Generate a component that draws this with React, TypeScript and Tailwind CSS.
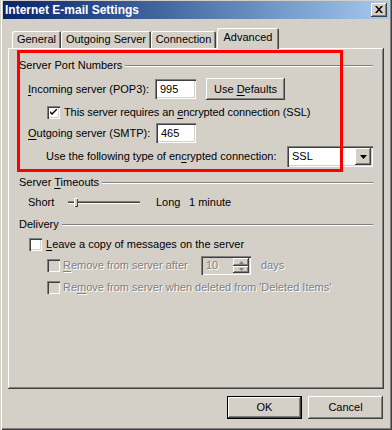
import type { ReactNode } from 'react';

const raised =
  'shadow-[inset_-1px_-1px_0_#404040,inset_1px_1px_0_#ffffff,inset_-2px_-2px_0_#808080,inset_2px_2px_0_#d4d0c8]';
const sunken =
  'shadow-[inset_1px_1px_0_#808080,inset_2px_2px_0_#404040,inset_-1px_-1px_0_#ffffff,inset_-2px_-2px_0_#d4d0c8]';
const disabledText = 'text-[#808080] [text-shadow:1px_1px_0_#ffffff]';

function U({ children }: { children: ReactNode }) {
  return <span className="underline underline-offset-[2px]">{children}</span>;
}

function Checkbox({ checked = false, disabled = false }: { checked?: boolean; disabled?: boolean }) {
  return (
    <div className={`w-[13px] h-[13px] shrink-0 flex items-center justify-center ${sunken} ${disabled ? 'bg-[#d4d0c8]' : 'bg-white'}`}>
      {checked && (
        <svg width="7" height="7" viewBox="0 0 7 7">
          <path d="M0 2 L0 4 L2 6 L7 1 L7 -1 L2 4 Z" fill="#000" />
        </svg>
      )}
    </div>
  );
}

function GroupHeader({ label, className = '' }: { label: ReactNode; className?: string }) {
  return (
    <div className={`flex items-center h-[13px] ${className}`}>
      <span className="whitespace-nowrap pr-[3px]">{label}</span>
      <div className="flex-1 h-[2px] border-t border-t-[#808080] border-b border-b-white" />
    </div>
  );
}

function Tab({ label, w, active = false }: { label: string; w: string; active?: boolean }) {
  return (
    <div
      className={`${w} flex items-center justify-center rounded-t-[2px] bg-[#d4d0c8] shadow-[inset_1px_1px_0_#ffffff,inset_-1px_0_0_#404040,inset_-2px_0_0_#808080] ${
        active ? 'h-[21px] -mb-[1px] relative z-10 pb-[2px]' : 'h-[17px]'
      }`}
    >
      {label}
    </div>
  );
}

function Button({ children, isDefault = false }: { children: ReactNode; isDefault?: boolean }) {
  if (isDefault) {
    return (
      <div className="w-[75px] h-[23px] border border-black flex">
        <div className={`flex-1 flex items-center justify-center ${raised}`}>{children}</div>
      </div>
    );
  }
  return <div className={`w-[75px] h-[23px] flex items-center justify-center ${raised}`}>{children}</div>;
}

export default function App() {
  return (
    <div className="relative w-[392px] h-[430px] overflow-hidden bg-[#d4d0c8] text-black text-[11px] leading-[13px] font-['Liberation_Sans','DejaVu_Sans',sans-serif] shadow-[inset_1px_0_0_#d4d0c8,inset_2px_0_0_#ffffff,inset_-1px_-1px_0_#404040,inset_-2px_-2px_0_#808080] pt-[1px]">
      {/* title bar */}
      <div className="mx-[3px] h-[18px] flex items-center bg-linear-to-r from-[#0a246a] to-[#a6caf0]">
        <span className="pl-[2px] text-white font-bold text-[12px]">Internet E-mail Settings</span>
        <div className="ml-auto mr-[2px] w-[16px] h-[14px] flex items-center justify-center bg-[#d4d0c8] shadow-[inset_-1px_-1px_0_#404040,inset_1px_1px_0_#ffffff,inset_-2px_-2px_0_#808080]">
          <svg width="8" height="7" viewBox="0 0 8 7" className="-mt-[1px] -ml-[1px]">
            <path d="M0 0 H2 L4 2.5 L6 0 H8 L5 3.5 L8 7 H6 L4 4.5 L2 7 H0 L3 3.5 Z" fill="#000" />
          </svg>
        </div>
      </div>

      <div className="px-[8px]">
        {/* tabs */}
        <div className="mt-[10px] h-[19px] flex items-end pl-[4px]">
          <Tab label="General" w="w-[49px]" />
          <Tab label="Outgoing Server" w="w-[90px]" />
          <Tab label="Connection" w="w-[65px]" />
          <div className="ml-[1px]">
            <Tab label="Advanced" w="w-[62px]" active />
          </div>
        </div>

        {/* panel */}
        <div className="h-[341px] pt-[11px] pl-[11px] pr-[11px] shadow-[inset_-1px_-1px_0_#404040,inset_1px_1px_0_#ffffff,inset_-2px_-2px_0_#808080] flex flex-col">
          <GroupHeader label="Server Port Numbers" />

          <div className="mt-[6px] h-[22px] flex items-center">
            <span className="ml-[9px] w-[127px]">
              <U>I</U>ncoming server (POP3):
            </span>
            <div className={`w-[41px] h-[20px] bg-white pl-[5px] flex items-center ${sunken}`}>995</div>
            <div className={`ml-[10px] w-[79px] h-[22px] flex items-center justify-center ${raised}`}>
              Use&nbsp;<U>D</U>efaults
            </div>
          </div>

          <div className="mt-[6px] h-[13px] flex items-center">
            <div className="ml-[28px]">
              <Checkbox checked />
            </div>
            <span className="ml-[4px] tracking-[-0.1px]">
              This server requires an <U>e</U>ncrypted connection (SSL)
            </span>
          </div>

          <div className="mt-[4px] h-[20px] flex items-center">
            <span className="ml-[9px] w-[128px]">
              <U>O</U>utgoing server (SMTP):
            </span>
            <div className={`w-[40px] h-[20px] bg-white pl-[5px] flex items-center ${sunken}`}>465</div>
          </div>

          <div className="mt-[3px] h-[21px] flex items-center">
            <span className="ml-[27px] w-[241px]">
              Use the following type of en<U>c</U>rypted connection:
            </span>
            <div className={`w-[86px] h-[21px] bg-white flex items-center pl-[5px] pr-[2px] ${sunken}`}>
              <span className="flex-1">SSL</span>
              <div className={`w-[16px] h-[17px] bg-[#d4d0c8] flex items-center justify-center ${raised}`}>
                <svg width="7" height="4" viewBox="0 0 7 4">
                  <path d="M0 0 H7 L3.5 4 Z" fill="#000" />
                </svg>
              </div>
            </div>
          </div>

          <GroupHeader
            className="mt-[9px]"
            label={
              <>
                Server <U>T</U>imeouts
              </>
            }
          />

          <div className="mt-[7px] h-[13px] flex items-center">
            <span className="ml-[9px] w-[40px]">Short</span>
            <div className="relative w-[72px] h-[13px] flex items-center">
              <div className="w-full h-[3px] border-t border-t-[#808080] bg-[#404040] border-b border-b-white" />
              <div className="absolute left-[6px] top-[2px] w-[4px] h-[9px] bg-[#d4d0c8] shadow-[inset_1px_1px_0_#ffffff,inset_-1px_-1px_0_#404040]" />
            </div>
            <span className="ml-[16px] w-[33px]">Long</span>
            <span>1 minute</span>
          </div>

          <GroupHeader className="mt-[9px]" label="Delivery" />

          <div className="mt-[7px] h-[13px] flex items-center">
            <div className="ml-[10px]">
              <Checkbox />
            </div>
            <span className="ml-[4px]">
              <U>L</U>eave a copy of messages on the server
            </span>
          </div>

          <div className="mt-[5px] h-[19px] flex items-center">
            <div className="ml-[28px]">
              <Checkbox disabled />
            </div>
            <span className={`ml-[3px] w-[138px] ${disabledText}`}>
              <U>R</U>emove from server after
            </span>
            <div className={`w-[50px] h-[19px] flex items-center pl-[5px] pr-[2px] ${sunken}`}>
              <span className={`flex-1 ${disabledText}`}>10</span>
              <div className="flex flex-col">
                <div className={`w-[16px] h-[8px] flex items-center justify-center ${raised}`}>
                  <svg width="5" height="3" viewBox="0 0 5 3">
                    <path d="M2.5 0 L5 3 H0 Z" fill="#808080" />
                  </svg>
                </div>
                <div className={`w-[16px] h-[7px] flex items-center justify-center ${raised}`}>
                  <svg width="5" height="3" viewBox="0 0 5 3">
                    <path d="M0 0 H5 L2.5 3 Z" fill="#808080" />
                  </svg>
                </div>
              </div>
            </div>
            <span className={`ml-[10px] ${disabledText}`}>days</span>
          </div>

          <div className="mt-[6px] h-[13px] flex items-center">
            <div className="ml-[28px]">
              <Checkbox disabled />
            </div>
            <span className={`ml-[3px] ${disabledText}`}>
              Re<U>m</U>ove from server when deleted from 'Deleted Items'
            </span>
          </div>
        </div>

        {/* buttons */}
        <div className="mt-[7px] flex justify-end gap-[6px] pr-[1px]">
          <Button isDefault>OK</Button>
          <Button>Cancel</Button>
        </div>
      </div>

      {/* red highlight box */}
      <div className="absolute left-[17px] top-[50px] w-[326px] h-[122px] border-[3px] border-[#ff0000]" />
    </div>
  );
}
